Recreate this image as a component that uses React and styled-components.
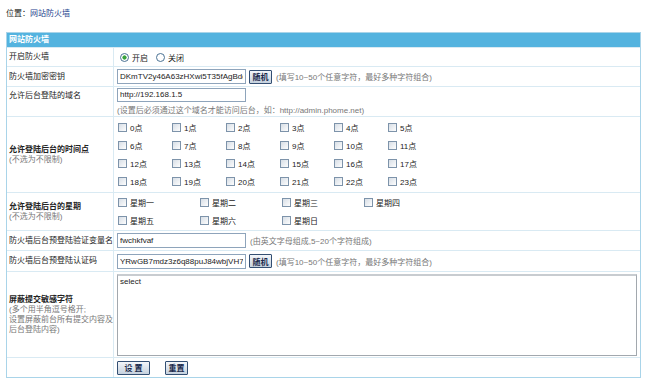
import React from 'react';
import styled, { createGlobalStyle } from 'styled-components';

const GlobalStyle = createGlobalStyle`
  body {
    margin: 0;
    background: #fff;
    color: #222;
    font-family: "Liberation Sans", "Noto Sans CJK SC", sans-serif;
    font-size: 8px;
  }
`;

const Page = styled.div`
  padding: 9px 6px 0 6px;
  width: 635px;
`;

const Location = styled.div`
  height: 10px;
  line-height: 10px;
  margin-bottom: 13px;
  a {
    color: #1d3f8e;
    text-decoration: none;
  }
`;

const Panel = styled.div`
  border: 1px solid #a9d4e9;
  box-sizing: border-box;
  width: 635px;
`;

const Header = styled.div`
  height: 14px;
  line-height: 14px;
  background: #54b3df;
  color: #fff;
  font-weight: bold;
  padding-left: 2px;
`;

const Row = styled.div`
  box-sizing: border-box;
  display: grid;
  grid-template-columns: 107px 1fr;
  height: ${(p) => p.h}px;
  border-top: 1px solid #d9eaf3;
  overflow: hidden;
`;

const Label = styled.div`
  box-sizing: border-box;
  border-right: 1px solid #d9eaf3;
  padding: ${(p) => (p.top ? '4px 0 0 2px' : '0 0 0 2px')};
  display: flex;
  flex-direction: column;
  justify-content: ${(p) => (p.top ? 'flex-start' : 'center')};
  font-weight: ${(p) => (p.bold ? 'bold' : 'normal')};
  line-height: 10px;
`;

const Note = styled.span`
  color: #777;
  font-weight: normal;
`;

const Value = styled.div`
  display: flex;
  flex-direction: ${(p) => (p.column ? 'column' : 'row')};
  align-items: ${(p) => (p.column ? 'flex-start' : 'center')};
  justify-content: ${(p) => (p.column ? 'center' : 'flex-start')};
  padding: 0 3px;
  gap: ${(p) => p.gap || 0}px;
`;

const Hint = styled.span`
  color: #777;
  margin-left: 4px;
  white-space: nowrap;
`;

const SubHint = styled.span`
  color: #777;
  line-height: 10px;
  white-space: nowrap;
`;

const TextInput = styled.input`
  box-sizing: border-box;
  width: 129px;
  height: ${(p) => p.h || 15}px;
  border: 1px solid #8ea4bb;
  padding: 0 2px;
  font-family: inherit;
  font-size: 8px;
  color: #222;
  outline: none;
`;

const Button = styled.button`
  box-sizing: border-box;
  height: 14px;
  width: ${(p) => p.w}px;
  margin-left: ${(p) => p.ml || 0}px;
  padding: 0;
  border: 1px solid #334f73;
  border-radius: 1px;
  background: linear-gradient(#f3f6fa, #c5d1de);
  color: #1b2b4d;
  font-family: inherit;
  font-size: 8px;
  font-weight: bold;
`;

const Radio = styled.input.attrs({ type: 'radio' })`
  appearance: none;
  width: 9px;
  height: 9px;
  margin: 0 3px 0 3px;
  border: 1px solid #4a7294;
  border-radius: 50%;
  box-sizing: border-box;
  background: #fff;
  &:checked {
    background: radial-gradient(circle, #37a23c 0 1.8px, #fff 2.4px);
  }
`;

const RadioText = styled.span`
  margin-right: 5px;
`;

const Grid = styled.div`
  display: grid;
  grid-template-columns: repeat(${(p) => p.cols}, ${(p) => p.cw}px);
  grid-auto-rows: ${(p) => p.rh}px;
  align-content: center;
  padding-left: 4px;
`;

const Item = styled.label`
  display: flex;
  align-items: center;
  gap: 3px;
  white-space: nowrap;
`;

const Check = styled.input.attrs({ type: 'checkbox' })`
  appearance: none;
  margin: 0;
  width: 9px;
  height: 9px;
  box-sizing: border-box;
  border: 1px solid #7d93aa;
  background: linear-gradient(135deg, #d7dee6, #fdfdfd);
`;

const TextArea = styled.textarea`
  box-sizing: border-box;
  width: 520px;
  height: 82px;
  border: 1px solid #a2a8ae;
  border-top: 2px solid #c8ccd0;
  padding: 1px 2px;
  font-family: inherit;
  font-size: 8px;
  color: #222;
  resize: none;
  overflow-y: scroll;
  outline: none;
  &::-webkit-scrollbar {
    width: 9px;
  }
  &::-webkit-scrollbar-track {
    background: #f5f8fb;
    border-left: 1px solid #e3ebf2;
  }
  &::-webkit-scrollbar-button:single-button {
    display: block;
    height: 9px;
    background: linear-gradient(#eef3f8, #d5e0ea);
    border: 1px solid #c3d0dc;
  }
`;

const hours = Array.from({ length: 24 }, (_, i) => `${i}点`);
const days = ['星期一', '星期二', '星期三', '星期四', '星期五', '星期六', '星期日'];

export default function App() {
  return (
    <Page>
      <GlobalStyle />
      <Location>
        位置：<a href="#">网站防火墙</a>
      </Location>
      <Panel>
        <Header>网站防火墙</Header>
        <Row h={19}>
          <Label>开启防火墙</Label>
          <Value>
            <Radio name="open" defaultChecked />
            <RadioText>开启</RadioText>
            <Radio name="open" />
            <RadioText>关闭</RadioText>
          </Value>
        </Row>
        <Row h={20}>
          <Label>防火墙加密密钥</Label>
          <Value>
            <TextInput defaultValue="DKmTV2y46A63zHXwi5T35fAgBddk" />
            <Button w={23} ml={3}>随机</Button>
            <Hint>(填写10~50个任意字符，最好多种字符组合)</Hint>
          </Value>
        </Row>
        <Row h={30}>
          <Label top>允许后台登陆的域名</Label>
          <Value column gap={4}>
            <TextInput h={14} defaultValue="http://192.168.1.5" />
            <SubHint>(设置后必须通过这个域名才能访问后台，如：http://admin.phome.net)</SubHint>
          </Value>
        </Row>
        <Row h={76}>
          <Label bold>
            允许登陆后台的时间点
            <Note>(不选为不限制)</Note>
          </Label>
          <Grid cols={6} cw={54} rh={17.7}>
            {hours.map((h) => (
              <Item key={h}>
                <Check />
                {h}
              </Item>
            ))}
          </Grid>
        </Row>
        <Row h={38}>
          <Label bold>
            允许登陆后台的星期
            <Note>(不选为不限制)</Note>
          </Label>
          <Grid cols={4} cw={82} rh={18}>
            {days.map((d) => (
              <Item key={d}>
                <Check />
                {d}
              </Item>
            ))}
          </Grid>
        </Row>
        <Row h={20}>
          <Label>防火墙后台预登陆验证变量名</Label>
          <Value>
            <TextInput defaultValue="fwchkfvaf" />
            <Hint>(由英文字母组成,5~20个字符组成)</Hint>
          </Value>
        </Row>
        <Row h={21}>
          <Label>防火墙后台预登陆认证码</Label>
          <Value>
            <TextInput defaultValue="YRwGB7mdz3z6q88puJ84wbjVH78r" />
            <Button w={23} ml={3}>随机</Button>
            <Hint>(填写10~50个任意字符，最好多种字符组合)</Hint>
          </Value>
        </Row>
        <Row h={86}>
          <Label>
            <b>屏蔽提交敏感字符</b>
            <Note>(多个用半角逗号格开;</Note>
            <Note>设置屏蔽前台所有提交内容及</Note>
            <Note>后台登陆内容)</Note>
          </Label>
          <Value>
            <TextArea defaultValue="select" />
          </Value>
        </Row>
        <Row h={20}>
          <Label />
          <Value>
            <Button w={33}>设 置</Button>
            <Button w={23} ml={15}>重置</Button>
          </Value>
        </Row>
      </Panel>
    </Page>
  );
}
